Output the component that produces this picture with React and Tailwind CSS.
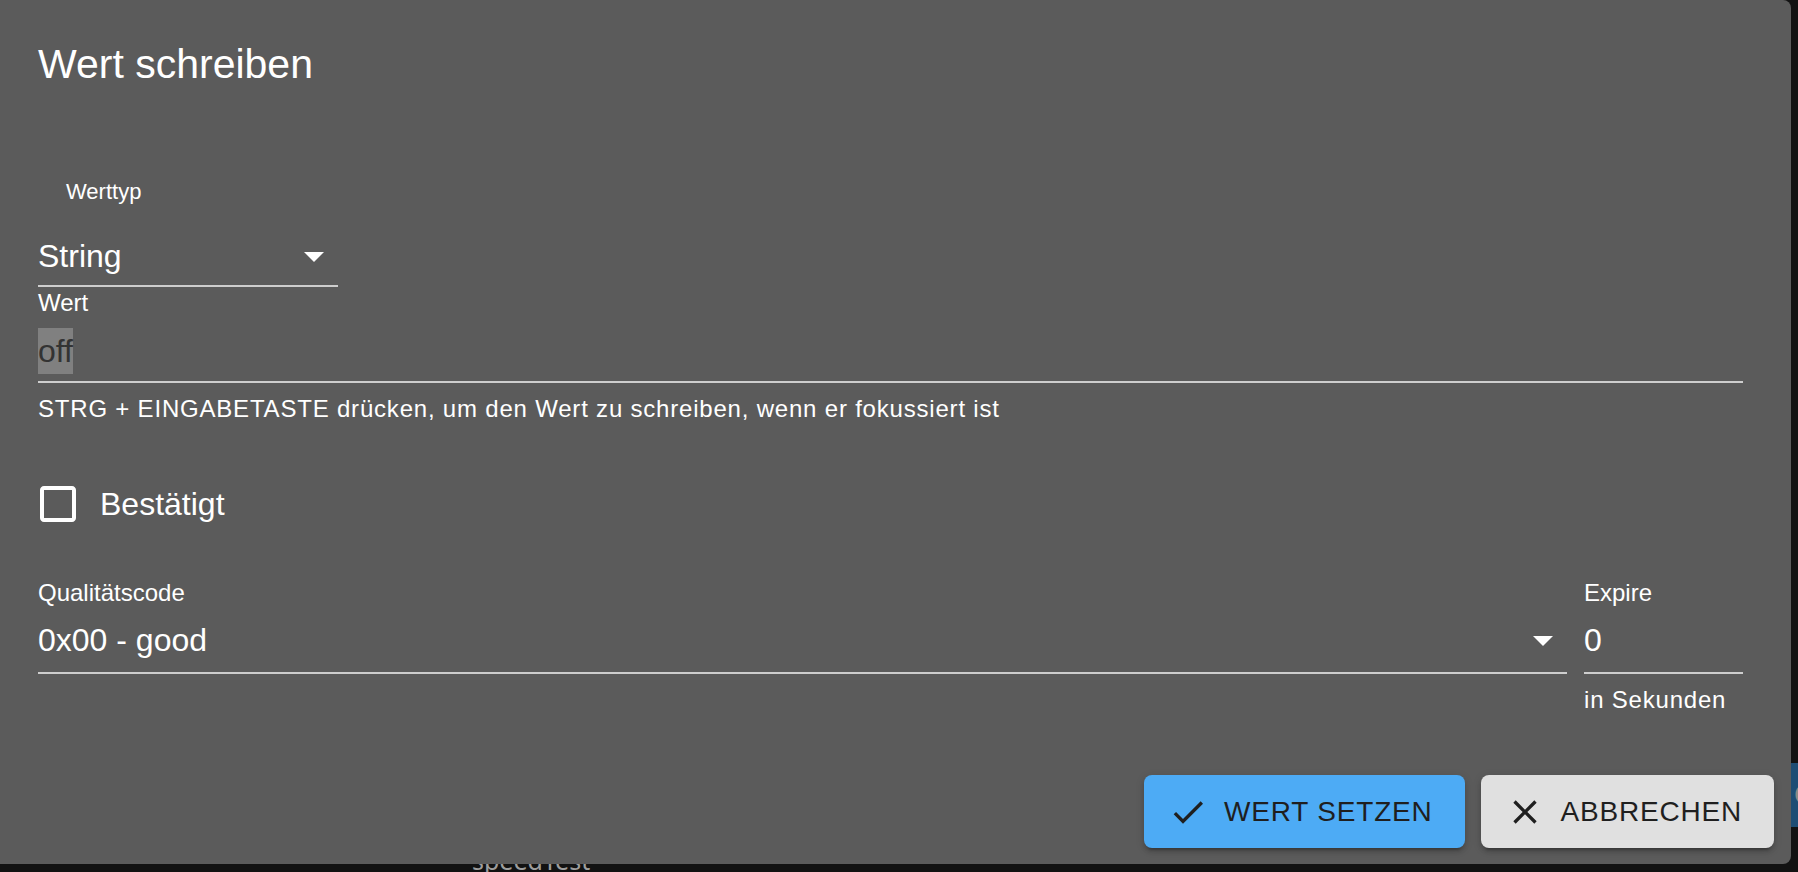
import React from 'react';

function ArrowDrop() {
  return (
    <svg width="48" height="48" viewBox="0 0 24 24" className="shrink-0" fill="#ffffff">
      <path d="M7 10l5 5 5-5z" />
    </svg>
  );
}

function Underlined({ children, className = '' }) {
  return <div className={`border-b-2 border-[#cecece] ${className}`}>{children}</div>;
}

export default function App() {
  return (
    <div className="relative w-[1798px] h-[872px] overflow-hidden bg-[#121212] font-['Liberation_Sans',Arial,sans-serif]">
      {/* page content behind the dialog */}
      <div className="absolute left-[472px] top-[848px] text-[25px] leading-[24px] text-[#9e9e9e] font-['Noto_Sans',sans-serif]">
        speedTest
      </div>
      <div className="absolute left-[1780px] top-[763px] w-[18px] h-[64px] bg-[#1e4d74] text-[#8a8a8a] text-[28px] leading-[64px] pl-[14px]">
        C
      </div>

      <div className="relative z-10 w-[1791px] h-[864px] bg-[#5b5b5b] rounded-r-[8px] flex flex-col text-white">
        <div className="pl-[38px] pr-[48px] flex flex-col">
          <h2 className="mt-[32px] text-[41px] leading-[64px]">Wert schreiben</h2>

          <div className="mt-[83px] ml-[28px] text-[22px] leading-[26px]">Werttyp</div>
          <Underlined className="mt-[31px] w-[300px] pb-[9px]">
            <div className="flex h-[40px] items-center justify-between">
              <span className="text-[32px] leading-[40px]">String</span>
              <ArrowDrop />
            </div>
          </Underlined>

          <div className="mt-[2px] text-[24px] leading-[28px]">Wert</div>
          <Underlined className="mt-[11px] pb-[7px]">
            <div className="h-[46px] flex">
              <span className="bg-[#808080] text-[#333333] text-[32px] leading-[46px]">off</span>
            </div>
          </Underlined>
          <p className="mt-[6px] text-[24px] leading-[40px] tracking-[0.8px]">
            STRG + EINGABETASTE drücken, um den Wert zu schreiben, wenn er fokussiert ist
          </p>

          <label className="mt-[33px] h-[84px] flex items-center">
            <svg width="48" height="48" viewBox="0 0 24 24" className="-ml-[4px]" fill="#ffffff">
              <path d="M19 5v14H5V5h14m0-2H5c-1.11 0-2 .9-2 2v14c0 1.1.89 2 2 2h14c1.1 0 2-.9 2-2V5c0-1.1-.9-2-2-2z" />
            </svg>
            <span className="ml-[18px] text-[32px] leading-[48px]">Bestätigt</span>
          </label>

          <div className="mt-[33px] flex items-start gap-[17px]">
            <div className="flex-1 flex flex-col">
              <div className="text-[24px] leading-[28px]">Qualitätscode</div>
              <Underlined className="mt-[10px] pb-[9px]">
                <div className="flex h-[46px] items-center justify-between">
                  <span className="text-[32px] leading-[46px]">0x00 - good</span>
                  <ArrowDrop />
                </div>
              </Underlined>
            </div>
            <div className="w-[159px] flex flex-col">
              <div className="text-[24px] leading-[28px]">Expire</div>
              <Underlined className="mt-[10px] pb-[9px]">
                <div className="h-[46px] text-[32px] leading-[46px]">0</div>
              </Underlined>
              <p className="mt-[6px] text-[24px] leading-[40px] tracking-[0.8px]">in Sekunden</p>
            </div>
          </div>
        </div>

        <div className="mt-[55px] pr-[17px] flex justify-end gap-[16px]">
          <button className="h-[73px] pl-[32px] pr-[32px] flex items-center rounded-[8px] bg-[#4dabf5] text-[#1f1f1f] text-[28px] leading-[49px] tracking-[0.8px] uppercase shadow-[0_6px_2px_-4px_rgba(0,0,0,0.2),0_4px_4px_0_rgba(0,0,0,0.14),0_2px_10px_0_rgba(0,0,0,0.12)]">
            <svg width="40" height="40" viewBox="0 0 24 24" className="-ml-[8px] mr-[16px]" fill="#1f1f1f">
              <path d="M9 16.17L4.83 12l-1.42 1.41L9 19 21 7l-1.41-1.41z" />
            </svg>
            Wert setzen
          </button>
          <button className="h-[73px] pl-[32px] pr-[32px] flex items-center rounded-[8px] bg-[#e0e0e0] text-[#1f1f1f] text-[28px] leading-[49px] tracking-[0.8px] uppercase shadow-[0_6px_2px_-4px_rgba(0,0,0,0.2),0_4px_4px_0_rgba(0,0,0,0.14),0_2px_10px_0_rgba(0,0,0,0.12)]">
            <svg width="40" height="40" viewBox="0 0 24 24" className="-ml-[8px] mr-[16px]" fill="#1f1f1f">
              <path d="M19 6.41L17.59 5 12 10.59 6.41 5 5 6.41 10.59 12 5 17.59 6.41 19 12 13.41 17.59 19 19 17.59 13.41 12z" />
            </svg>
            Abbrechen
          </button>
        </div>
      </div>
    </div>
  );
}
